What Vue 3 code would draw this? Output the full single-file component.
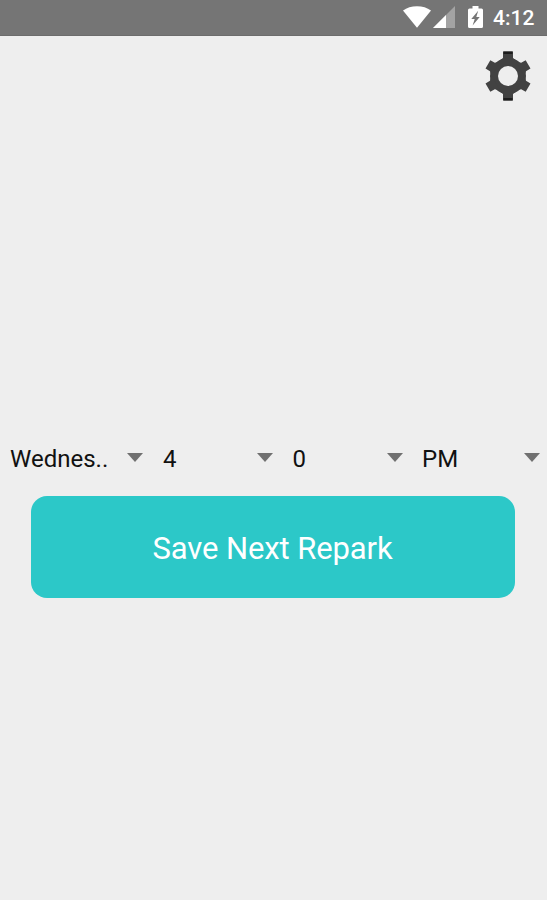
<script setup>
import { ref } from 'vue'

const time = ref('4:12')

const spinners = ref([
  { id: 'day', label: 'Wednes..' },
  { id: 'hour', label: '4' },
  { id: 'minute', label: '0' },
  { id: 'period', label: 'PM' }
])
</script>

<template>
  <div class="screen">
    <header class="status-bar">
      <svg class="wifi" width="28" height="22" viewBox="0 0 28 22">
        <path d="M0 4.6C3.8 1.7 8.600 0.3 14 0.3s10.200 1.400 14 4.300L14 21.800z" fill="#fff" />
      </svg>
      <svg class="signal" width="22" height="22" viewBox="0 0 22 22">
        <path d="M22 0v22H0z" fill="#a3a3a3" />
        <path d="M13 9V22H0z" fill="#fff" />
      </svg>
      <svg class="battery" width="15" height="22" viewBox="0 0 15 22">
        <path d="M4.500 0h6v2.500H13.500Q15 2.500 15 4v16.500Q15 22 13.500 22h-12Q0 22 0 20.500V4Q0 2.500 1.500 2.500h3z" fill="#fff" />
        <path d="M10.200 4.800L3.300 13h3.400L4.600 19.500L11.700 11H8.300z" fill="#757575" />
      </svg>
      <span class="time">{{ time }}</span>
    </header>

    <div class="toolbar">
      <button class="settings" aria-label="Settings">
        <svg width="48" height="50" viewBox="-24 -25 48 50">
          <g fill="#424242">
            <circle r="18" />
            <path v-for="angle in [60, 120, 240, 300]" :key="angle" :transform="`rotate(${angle})`" d="M-8.500-14L-4.800-18V-23.200H4.800V-18L8.500-14z" />
            <path v-for="angle in [0, 180]" :key="angle" :transform="`rotate(${angle})`" d="M-10-14L-5-18V-24.500H5V-18L10-14z" />
          </g>
          <path d="M-4.500-24.500h9v2.500h-9zM-4.500 22h9v2.500h-9z" fill="#1c1c1c" />
          <circle r="10" fill="#eee" />
        </svg>
      </button>
    </div>

    <main class="content">
      <div class="spinners">
        <div v-for="item in spinners" :key="item.id" class="spinner" :class="item.id">
          <span>{{ item.label }}</span>
          <svg width="16" height="9" viewBox="0 0 16 9">
            <path d="M0 0h16L8 9z" fill="#707070" />
          </svg>
        </div>
      </div>
      <button class="save">Save Next Repark</button>
    </main>
  </div>
</template>

<style>
body {
  background: #eee;
}
</style>

<style scoped>
.screen {
  height: 900px;
  background: #eee;
  font-family: Roboto, sans-serif;
  overflow: hidden;
}

.status-bar {
  display: flex;
  align-items: flex-start;
  justify-content: flex-end;
  box-sizing: border-box;
  height: 36px;
  padding: 6px 11px 0 0;
  background: #757575;
  border-bottom: 1px solid #6c6c6c;
}

.signal {
  margin-left: 2px;
}

.battery {
  margin-left: 13px;
}

.time {
  width: 43px;
  margin-left: 10px;
  color: #fff;
  font-size: 21px;
  font-weight: 500;
  line-height: 24px;
  white-space: nowrap;
}

.toolbar {
  display: flex;
  justify-content: flex-end;
  height: 65px;
  padding: 15px 15.5px 0 0;
  box-sizing: border-box;
}

button {
  padding: 0;
  border: 0;
  font-family: inherit;
}

.settings {
  display: flex;
  width: 48px;
  height: 50px;
  background: none;
}

.content {
  padding-top: 334px;
}

.spinners {
  display: grid;
  grid-template-columns: 153px 129.500px 130.500px 134px;
  height: 46px;
}

.spinner {
  display: flex;
  align-items: center;
  justify-content: space-between;
  box-sizing: border-box;
  padding: 0 10px;
  color: #111;
  font-size: 24px;
  line-height: 46px;
}

.spinner span {
  padding-top: 1px;
}

.spinner.period {
  padding: 0 7px 0 9px;
}

.spinner svg {
  margin-top: -2px;
}

.save {
  display: block;
  width: 484px;
  height: 102.500px;
  margin: 14.500px 0 0 30.500px;
  padding-top: 4px;
  border-radius: 16px;
  background: #2cc8c8;
  color: #fff;
  font-size: 31px;
  letter-spacing: -0.1px;
  line-height: 98px;
}
</style>
